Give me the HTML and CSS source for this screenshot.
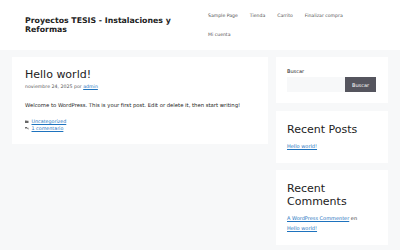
FILE: index.html
```html
<!DOCTYPE html>
<html lang="es">
<head>
  <meta charset="UTF-8" />
  <meta name="viewport" content="width=device-width, initial-scale=1.0"/>
  <title>Proyectos TESIS - Instalaciones y Reformas</title>
  <link rel="stylesheet" href="styles.css">
</head>
<body>

<header class="site-header">
  <div class="site-title">Proyectos TESIS - Instalaciones y Reformas</div>
  <nav class="main-nav">
    <a href="#">Sample Page</a>
    <a href="#">Tienda</a>
    <a href="#">Carrito</a>
    <a href="#">Finalizar compra</a>
    <a href="#">Mi cuenta</a>
  </nav>
</header>

<div class="site-content">
  <main class="post">
    <h1 class="post-title">Hello world!</h1>
    <div class="post-meta">noviembre 24, 2025 por <a href="#">admin</a></div>
    <p class="post-body">Welcome to WordPress. This is your first post. Edit or delete it, then start writing!</p>
    <footer class="post-footer">
      <div class="foot-line">
        <svg class="icon" viewBox="0 0 10 8"><path d="M0 1h4l1 1h5v6H0z"/></svg>
        <a href="#">Uncategorized</a>
      </div>
      <div class="foot-line">
        <svg class="icon" viewBox="0 0 10 9"><path d="M0 0h6v4H2L0 6z M7 2h3v6l-2-2H4V5h3z"/></svg>
        <a href="#">1 comentario</a>
      </div>
    </footer>
  </main>

  <aside class="sidebar">
    <section class="widget search">
      <label class="search-label">Buscar</label>
      <div class="search-row">
        <input class="search-input" type="text">
        <button class="search-btn">Buscar</button>
      </div>
    </section>
    <section class="widget">
      <h2 class="widget-title">Recent Posts</h2>
      <div class="widget-text"><a href="#">Hello world!</a></div>
    </section>
    <section class="widget">
      <h2 class="widget-title">Recent Comments</h2>
      <div class="widget-text"><a href="#">A WordPress Commenter</a> en <a href="#">Hello world!</a></div>
    </section>
  </aside>
</div>

</body>
</html>
```

FILE: styles.css
```css
body {
  margin: 0;
  font-family: "DejaVu Sans", sans-serif;
  background: #f7f8f9;
  color: #222;
}

a {
  color: #1e73be;
}

.site-header {
  background: #fff;
  height: 50px;
  padding: 0 25px;
  display: flex;
  align-items: center;
  justify-content: space-between;
  box-sizing: border-box;
}

.site-title {
  font-weight: bold;
  font-size: 7.8px;
  line-height: 9px;
  width: 168px;
}

.main-nav {
  width: 173px;
  display: flex;
  flex-wrap: wrap;
}

.main-nav a {
  color: #515151;
  text-decoration: none;
  font-size: 4.6px;
  line-height: 19px;
  padding: 0 6px;
}

.site-content {
  display: flex;
  gap: 8px;
  padding: 7px 12px;
  align-items: flex-start;
}

.post {
  background: #fff;
  flex: none;
  width: 256px;
  box-sizing: border-box;
  padding: 12px 13px 12.5px;
}

.post-title {
  margin: 0;
  font-weight: normal;
  font-size: 11px;
  line-height: 12px;
}

.post-meta {
  margin-top: 3px;
  font-size: 4.7px;
  line-height: 6px;
  color: #595959;
}

.post-body {
  margin: 12px 0 8.5px;
  font-size: 5.3px;
  line-height: 7px;
}

.post-footer {
  font-size: 4.8px;
  line-height: 7px;
}

.foot-line {
  display: flex;
  align-items: center;
  gap: 3px;
}

.icon {
  width: 3.5px;
  height: 3px;
  fill: #666;
}

.sidebar {
  flex: none;
  width: 112px;
  display: flex;
  flex-direction: column;
  gap: 7.5px;
}

.widget {
  background: #fff;
  padding: 12px 11px;
}

.widget.search {
  padding: 11px 12px 11px 11px;
}

.search-label {
  display: block;
  font-size: 5px;
  line-height: 7px;
  margin-bottom: 2px;
}

.search-row {
  display: flex;
}

.search-input {
  flex: 1;
  min-width: 0;
  height: 15px;
  box-sizing: border-box;
  border: 0;
  background: #f7f8f9;
  margin: 0;
}

.search-btn {
  width: 31px;
  height: 15px;
  border: 0;
  margin: 0;
  padding: 0;
  background: #55555e;
  color: #fff;
  font-family: inherit;
  font-size: 5px;
}

.widget-title {
  margin: 0 0 5px;
  font-weight: normal;
  font-size: 11px;
  line-height: 13px;
}

.widget-text {
  font-size: 5px;
  line-height: 10px;
  color: #3a3a3a;
}

.widget-text a {
  white-space: nowrap;
}
```
